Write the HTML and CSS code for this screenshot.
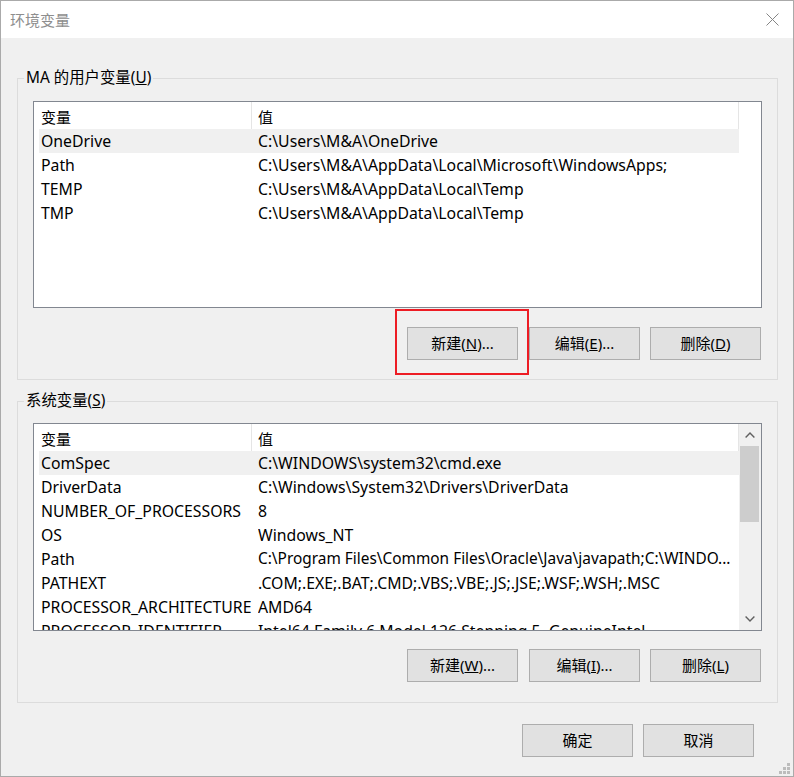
FILE: index.html
```html
<!DOCTYPE html>
<html lang="zh-CN">
<head>
<meta charset="utf-8">
<title>环境变量</title>
<link rel="stylesheet" href="styles.css">
</head>
<body>
<div class="window">
  <div class="titlebar">
    <span class="title">环境变量</span>
    <svg class="close" width="13" height="13" viewBox="0 0 13 13"><path d="M0.5 0.5 L12.5 12.5 M12.5 0.5 L0.5 12.5" stroke="#858585" stroke-width="1" fill="none"/></svg>
  </div>
  <div class="client">
    <fieldset class="group group-user">
      <legend>MA 的用户变量(<u>U</u>)</legend>
      <div class="group-body body-user">
        <div class="list">
          <div class="list-main">
            <div class="list-head"><div class="head-cell">变量</div><div class="head-cell">值</div></div>
            <div class="row selected"><span class="c1">OneDrive</span><span class="c2">C:\Users\M&amp;A\OneDrive</span></div>
            <div class="row"><span class="c1">Path</span><span class="c2">C:\Users\M&amp;A\AppData\Local\Microsoft\WindowsApps;</span></div>
            <div class="row"><span class="c1">TEMP</span><span class="c2">C:\Users\M&amp;A\AppData\Local\Temp</span></div>
            <div class="row"><span class="c1">TMP</span><span class="c2">C:\Users\M&amp;A\AppData\Local\Temp</span></div>
          </div>
        </div>
        <div class="btnrow">
          <div class="mark"><button class="btn">新建(<u>N</u>)...</button></div>
          <button class="btn b2">编辑(<u>E</u>)...</button>
          <button class="btn b3">删除(<u>D</u>)</button>
        </div>
      </div>
    </fieldset>
    <fieldset class="group group-sys">
      <legend>系统变量(<u>S</u>)</legend>
      <div class="group-body body-sys">
        <div class="list list-sys">
          <div class="list-main">
            <div class="list-head"><div class="head-cell">变量</div><div class="head-cell">值</div></div>
            <div class="row selected"><span class="c1">ComSpec</span><span class="c2">C:\WINDOWS\system32\cmd.exe</span></div>
            <div class="row"><span class="c1">DriverData</span><span class="c2">C:\Windows\System32\Drivers\DriverData</span></div>
            <div class="row"><span class="c1">NUMBER_OF_PROCESSORS</span><span class="c2">8</span></div>
            <div class="row"><span class="c1">OS</span><span class="c2">Windows_NT</span></div>
            <div class="row"><span class="c1">Path</span><span class="c2 tight">C:\Program Files\Common Files\Oracle\Java\javapath;C:\WINDO...</span></div>
            <div class="row"><span class="c1">PATHEXT</span><span class="c2">.COM;.EXE;.BAT;.CMD;.VBS;.VBE;.JS;.JSE;.WSF;.WSH;.MSC</span></div>
            <div class="row"><span class="c1">PROCESSOR_ARCHITECTURE</span><span class="c2">AMD64</span></div>
            <div class="row"><span class="c1">PROCESSOR_IDENTIFIER</span><span class="c2">Intel64 Family 6 Model 126 Stepping 5, GenuineIntel</span></div>
          </div>
          <div class="scrollbar">
            <div class="sb-btn"><svg width="10" height="6" viewBox="0 0 10 6"><path d="M0.6 5.4 L5 1 L9.4 5.4" stroke="#606060" stroke-width="1.4" fill="none"/></svg></div>
            <div class="sb-track"><div class="sb-thumb"></div></div>
            <div class="sb-btn"><svg width="10" height="6" viewBox="0 0 10 6"><path d="M0.6 0.6 L5 5 L9.4 0.6" stroke="#606060" stroke-width="1.4" fill="none"/></svg></div>
          </div>
        </div>
        <div class="btnrow">
          <button class="btn">新建(<u>W</u>)...</button>
          <button class="btn b2">编辑(<u>I</u>)...</button>
          <button class="btn b3">删除(<u>L</u>)</button>
        </div>
      </div>
    </fieldset>
    <div class="dlg-buttons">
      <button class="btn">确定</button>
      <button class="btn">取消</button>
    </div>
  </div>
  <svg class="grip" width="11" height="11" viewBox="0 0 11 11">
    <rect x="8" y="0" width="3" height="3" fill="#bcbcbc"/>
    <rect x="4" y="4" width="3" height="3" fill="#bcbcbc"/>
    <rect x="8" y="4" width="3" height="3" fill="#bcbcbc"/>
    <rect x="0" y="8" width="3" height="3" fill="#bcbcbc"/>
    <rect x="4" y="8" width="3" height="3" fill="#bcbcbc"/>
    <rect x="8" y="8" width="3" height="3" fill="#bcbcbc"/>
  </svg>
</div>
</body>
</html>
```
FILE: styles.css
```css
* { box-sizing: border-box; }
html, body { margin: 0; padding: 0; }
body {
  width: 794px;
  height: 777px;
  overflow: hidden;
  background: #fff;
  font-family: "Noto Sans", "Noto Sans CJK SC", sans-serif;
  font-size: 15px;
  color: #000;
}
.window {
  position: relative;
  width: 794px;
  height: 777px;
  border: 1px solid #aaaaaa;
  background: #f0f0f0;
  display: flex;
  flex-direction: column;
}
.titlebar {
  flex: none;
  height: 37px;
  background: #fff;
  display: flex;
  align-items: center;
  justify-content: space-between;
  padding: 0 14px 0 9px;
}
.title { color: #8e8e8e; line-height: 20px; }
.close { display: block; }
.client {
  flex: 1;
  padding: 30px 15px 0 16px;
  display: flex;
  flex-direction: column;
}
.group {
  margin: 0;
  padding: 0;
  min-width: 0;
  border: 1px solid #dcdcdc;
}
.group legend {
  margin-left: 6px;
  padding: 0 2px;
  height: 20px;
  line-height: 20px;
  font-size: 15.4px;
}
.group-sys { margin-top: 11px; }
.group-body { padding: 0 15px; }
.body-user { padding-top: 13px; padding-bottom: 19px; }
.body-sys { padding-top: 12px; padding-bottom: 20px; }
.list {
  display: flex;
  height: 207px;
  border: 1px solid #828790;
  background: #fff;
  overflow: hidden;
}
.list-sys { height: 208px; }
.list-main { width: 705px; flex: none; }
.list-head {
  display: grid;
  grid-template-columns: 218px 487px;
  height: 27px;
}
.head-cell {
  border-right: 1px solid #e5e5e5;
  padding: 3px 0 0 7px;
  line-height: 24px;
}
.head-cell + .head-cell { padding-left: 6px; }
.row {
  margin-left: 5px;
  display: grid;
  grid-template-columns: 219px 481px;
  height: 24px;
  line-height: 24px;
  white-space: nowrap;
  font-size: 15.8px;
}
.row.selected { background: #f0f0f0; }
.c1 { padding-left: 2px; overflow: hidden; }
.c2 { overflow: hidden; }
.c2.tight { font-size: 15.4px; }
.scrollbar {
  width: 22px;
  flex: none;
  background: #f0f0f0;
  display: flex;
  flex-direction: column;
}
.sb-btn {
  height: 22px;
  flex: none;
  display: flex;
  align-items: center;
  justify-content: center;
}
.sb-btn svg { display: block; }
.sb-track { flex: 1; padding-left: 1px; }
.sb-thumb { width: 19px; height: 76px; background: #cdcdcd; }
.btnrow {
  display: flex;
  justify-content: flex-end;
  margin-top: 19px;
  padding-right: 1px;
}
.body-sys .btnrow { margin-top: 18px; }
.btn {
  width: 111px;
  height: 33px;
  margin: 0;
  padding: 0;
  border: 1px solid #adadad;
  background: #e1e1e1;
  font: inherit;
  color: #000;
  line-height: 31px;
  display: block;
}
.b2 { margin-left: 11px; }
.b3 { margin-left: 10px; }
.mark { position: relative; }
.mark::after {
  content: "";
  position: absolute;
  left: -12px;
  top: -18px;
  right: -11px;
  bottom: -15px;
  border: 2px solid #ed1c24;
  pointer-events: none;
}
.dlg-buttons {
  display: flex;
  justify-content: flex-end;
  gap: 10px;
  margin-top: 21px;
  padding-right: 24px;
}
.grip {
  position: absolute;
  right: 3px;
  bottom: 2px;
  display: block;
}
```
